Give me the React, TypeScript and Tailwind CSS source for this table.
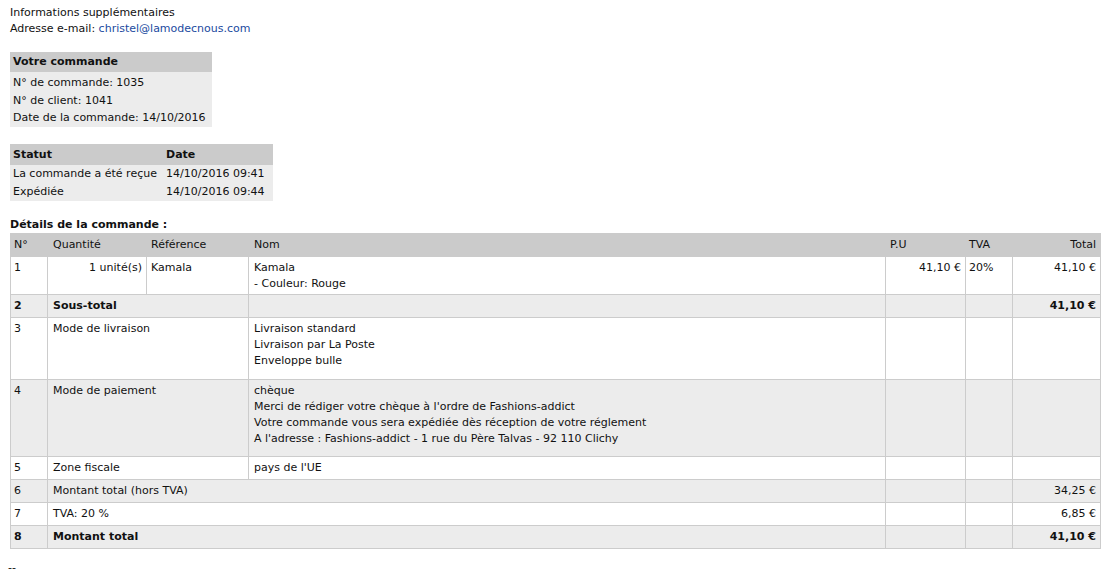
import React from "react";

const td = "border border-[#cccccc] px-[4px] py-[3px] align-top";

function OrderBox() {
  return (
    <div className="w-[202px] bg-[#ececec]">
      <div className="h-[20px] bg-[#cbcbcb] pl-[3px] font-bold leading-[20px]">
        Votre commande
      </div>
      <div className="pl-[3px] pt-[2px] leading-[17.5px]">
        <div>N° de commande: 1035</div>
        <div>N° de client: 1041</div>
        <div>Date de la commande: 14/10/2016</div>
      </div>
    </div>
  );
}

function StatusBox() {
  const rows = [
    ["La commande a été reçue", "14/10/2016 09:41"],
    ["Expédiée", "14/10/2016 09:44"],
  ];
  return (
    <div className="w-[263px] bg-[#ececec]">
      <div className="flex h-[21px] bg-[#cbcbcb] font-bold leading-[21px]">
        <div className="w-[156px] pl-[3px]">Statut</div>
        <div>Date</div>
      </div>
      {rows.map((r) => (
        <div key={r[0]} className="flex leading-[18px]">
          <div className="w-[156px] pl-[3px]">{r[0]}</div>
          <div>{r[1]}</div>
        </div>
      ))}
    </div>
  );
}

export default function App() {
  return (
    <div
      className="min-h-[576px] bg-white pl-[10px] pt-[5px] text-[11px] leading-[16px] text-[#111]"
      style={{ fontFamily: '"DejaVu Sans", Tahoma, sans-serif' }}
    >
      <div>Informations supplémentaires</div>
      <div>
        Adresse e-mail: <span className="text-[#1b4aa0]">christel@lamodecnous.com</span>
      </div>

      <div className="mt-[15px]">
        <OrderBox />
      </div>

      <div className="mt-[17px]">
        <StatusBox />
      </div>

      <div className="mt-[16px] font-bold">Détails de la commande :</div>

      <table className="w-[1091px] border-collapse">
        <colgroup>
          <col className="w-[37px]" />
          <col className="w-[99px]" />
          <col className="w-[102px]" />
          <col className="w-[637px]" />
          <col className="w-[80px]" />
          <col className="w-[47px]" />
          <col className="w-[88px]" />
        </colgroup>
        <thead>
          <tr className="bg-[#cbcbcb]">
            <th className="border border-[#cbcbcb] px-[3px] py-[3px] text-left font-normal">N°</th>
            <th className="border border-[#cbcbcb] px-[5px] py-[3px] text-left font-normal">Quantité</th>
            <th className="border border-[#cbcbcb] px-[4px] py-[3px] text-left font-normal">Référence</th>
            <th className="border border-[#cbcbcb] px-[5px] py-[3px] text-left font-normal">Nom</th>
            <th className="border border-[#cbcbcb] px-[4px] py-[3px] text-left font-normal">P.U</th>
            <th className="border border-[#cbcbcb] px-[3px] py-[3px] text-left font-normal">TVA</th>
            <th className="border border-[#cbcbcb] px-[4px] py-[3px] text-right font-normal">Total</th>
          </tr>
        </thead>
        <tbody>
          <tr>
            <td className={`${td} pl-[3px] pb-[2px]`}>1</td>
            <td className={`${td} text-right pb-[2px]`}>1 unité(s)</td>
            <td className={`${td} pb-[2px]`}>Kamala</td>
            <td className={`${td} pl-[5px] pb-[2px]`}>
              <div>Kamala</div>
              <div>- Couleur: Rouge</div>
            </td>
            <td className={`${td} text-right pb-[2px]`}>41,10 €</td>
            <td className={`${td} pl-[3px] pb-[2px]`}>20%</td>
            <td className={`${td} text-right pb-[2px]`}>41,10 €</td>
          </tr>
          <tr className="bg-[#ececec] font-bold">
            <td className={`${td} pl-[3px]`}>2</td>
            <td className={`${td} pl-[5px]`} colSpan={2}>Sous-total</td>
            <td className={td}></td>
            <td className={td}></td>
            <td className={td}></td>
            <td className={`${td} text-right`}>41,10 €</td>
          </tr>
          <tr>
            <td className={`${td} pl-[3px]`}>3</td>
            <td className={`${td} pl-[5px]`} colSpan={2}>Mode de livraison</td>
            <td className={`${td} pl-[5px] pb-[10px]`}>
              <div>Livraison standard</div>
              <div>Livraison par La Poste</div>
              <div>Enveloppe bulle</div>
            </td>
            <td className={td}></td>
            <td className={td}></td>
            <td className={td}></td>
          </tr>
          <tr className="bg-[#ececec]">
            <td className={`${td} pl-[3px]`}>4</td>
            <td className={`${td} pl-[5px]`} colSpan={2}>Mode de paiement</td>
            <td className={`${td} pl-[5px] pb-[9px]`}>
              <div>chèque</div>
              <div>Merci de rédiger votre chèque à l'ordre de Fashions-addict</div>
              <div>Votre commande vous sera expédiée dès réception de votre réglement</div>
              <div>A l'adresse : Fashions-addict - 1 rue du Père Talvas - 92 110 Clichy</div>
            </td>
            <td className={td}></td>
            <td className={td}></td>
            <td className={td}></td>
          </tr>
          <tr>
            <td className={`${td} pl-[3px]`}>5</td>
            <td className={`${td} pl-[5px]`} colSpan={2}>Zone fiscale</td>
            <td className={`${td} pl-[5px]`}>pays de l'UE</td>
            <td className={td}></td>
            <td className={td}></td>
            <td className={td}></td>
          </tr>
          <tr className="bg-[#ececec]">
            <td className={`${td} pl-[3px]`}>6</td>
            <td className={`${td} pl-[5px]`} colSpan={3}>Montant total (hors TVA)</td>
            <td className={td}></td>
            <td className={td}></td>
            <td className={`${td} text-right`}>34,25 €</td>
          </tr>
          <tr>
            <td className={`${td} pl-[3px]`}>7</td>
            <td className={`${td} pl-[5px]`} colSpan={3}>TVA: 20 %</td>
            <td className={td}></td>
            <td className={td}></td>
            <td className={`${td} text-right`}>6,85 €</td>
          </tr>
          <tr className="bg-[#ececec] font-bold">
            <td className={`${td} pl-[3px]`}>8</td>
            <td className={`${td} pl-[5px]`} colSpan={3}>Montant total</td>
            <td className={td}></td>
            <td className={td}></td>
            <td className={`${td} text-right`}>41,10 €</td>
          </tr>
        </tbody>
      </table>

      <div className="mt-[11px] -ml-[2px]">--</div>
    </div>
  );
}
